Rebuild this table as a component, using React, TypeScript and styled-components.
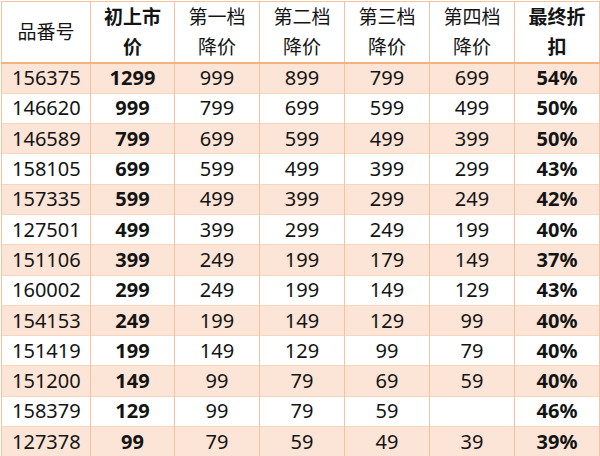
import styled, { createGlobalStyle } from "styled-components";

const GlobalStyle = createGlobalStyle`
  html, body {
    margin: 0;
    padding: 0;
    background: #ffffff;
  }
  body {
    font-family: "Noto Sans", "Noto Sans CJK SC", sans-serif;
    color: #141414;
  }
`;

const Wrapper = styled.div`
  width: 600px;
  height: 456px;
  overflow: hidden;
  padding: 1px 0 0 1px;
  box-sizing: border-box;
`;

const StyledTable = styled.table`
  width: 598px;
  border-collapse: collapse;
  table-layout: fixed;
  font-size: 19px;
  border: 1px solid #f4c4a2;
`;

const HeadRow = styled.tr`
  height: 60px;
  border-bottom: 2px solid #f4b183;
`;

const StyledTh = styled.th<{ $bold?: boolean }>`
  font-weight: ${(p) => (p.$bold ? 700 : 400)};
  line-height: 30px;
  padding: 0;
  text-align: center;
  border-left: 1px solid #f4c4a2;
  border-right: 1px solid #f4c4a2;
`;

const BodyRow = styled.tr<{ $striped: boolean }>`
  height: 30.3px;
  background: ${(p) => (p.$striped ? "#fce4d6" : "#ffffff")};
  border-bottom: 1px solid #f9d5bd;
`;

const StyledTd = styled.td<{ $bold?: boolean; $left?: boolean }>`
  font-size: 20px;
  font-weight: ${(p) => (p.$bold ? 700 : 400)};
  text-align: ${(p) => (p.$left ? "left" : "center")};
  padding: 0 0 0 ${(p) => (p.$left ? "10px" : "0")};
  line-height: 28px;
  border-left: 1px solid #f4c4a2;
  border-right: 1px solid #f4c4a2;
`;

const widths = [89, 84, 85, 85, 85, 85, 85];

const headers: { lines: string[]; bold?: boolean }[] = [
  { lines: ["品番号"] },
  { lines: ["初上市", "价"], bold: true },
  { lines: ["第一档", "降价"] },
  { lines: ["第二档", "降价"] },
  { lines: ["第三档", "降价"] },
  { lines: ["第四档", "降价"] },
  { lines: ["最终折", "扣"], bold: true },
];

const rows: string[][] = [
  ["156375", "1299", "999", "899", "799", "699", "54%"],
  ["146620", "999", "799", "699", "599", "499", "50%"],
  ["146589", "799", "699", "599", "499", "399", "50%"],
  ["158105", "699", "599", "499", "399", "299", "43%"],
  ["157335", "599", "499", "399", "299", "249", "42%"],
  ["127501", "499", "399", "299", "249", "199", "40%"],
  ["151106", "399", "249", "199", "179", "149", "37%"],
  ["160002", "299", "249", "199", "149", "129", "43%"],
  ["154153", "249", "199", "149", "129", "99", "40%"],
  ["151419", "199", "149", "129", "99", "79", "40%"],
  ["151200", "149", "99", "79", "69", "59", "40%"],
  ["158379", "129", "99", "79", "59", "", "46%"],
  ["127378", "99", "79", "59", "49", "39", "39%"],
];

export default function App() {
  return (
    <>
      <GlobalStyle />
      <Wrapper>
        <StyledTable>
          <colgroup>
            {widths.map((w, i) => (
              <col key={i} style={{ width: w }} />
            ))}
          </colgroup>
          <thead>
            <HeadRow>
              {headers.map((h, i) => (
                <StyledTh key={i} $bold={h.bold}>
                  {h.lines.map((l, j) => (
                    <div key={j}>{l}</div>
                  ))}
                </StyledTh>
              ))}
            </HeadRow>
          </thead>
          <tbody>
            {rows.map((r, i) => (
              <BodyRow key={r[0]} $striped={i % 2 === 0}>
                {r.map((c, j) => (
                  <StyledTd key={j} $left={j === 0} $bold={j === 1 || j === 6}>
                    {c}
                  </StyledTd>
                ))}
              </BodyRow>
            ))}
          </tbody>
        </StyledTable>
      </Wrapper>
    </>
  );
}
